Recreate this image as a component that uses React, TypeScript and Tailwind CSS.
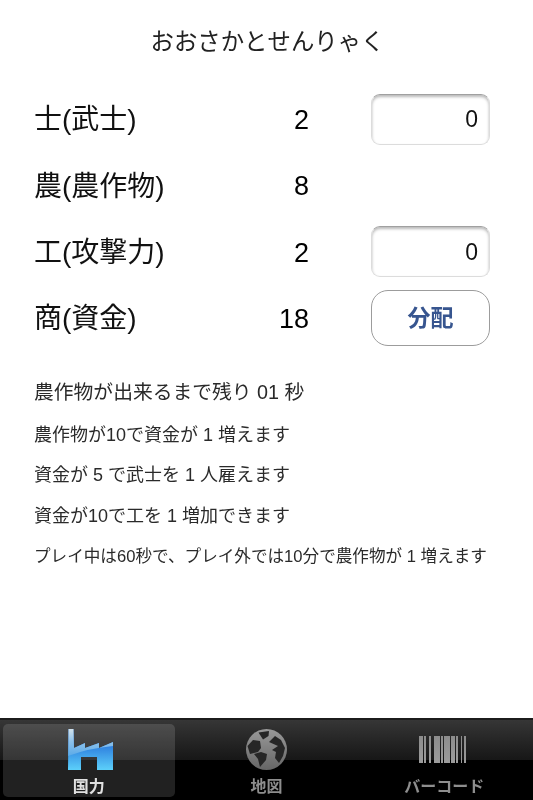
const font = '[font-family:"Liberation_Sans","Noto_Sans_CJK_JP",sans-serif]';

// widths of the bars, light and dark in turn
const barcode = [4, 1.3, 2, 2.3, 2.3, 3, 5.7, 1.3, 2, 1.3, 5.3, 1.3, 3.7, 1, 2, 3, 1.7, 1.3, 2.7];

function NumberField() {
  return (
    <div className="flex h-[51px] w-[119px] items-center justify-end rounded-[9px] border border-[#dcdcdc] border-t-[#a0a0a0] bg-white pr-[11px] text-[23px] text-[#111] shadow-[inset_0_2px_3px_rgba(0,0,0,0.28)]">
      0
    </div>
  );
}

function Row({ label, value, control }: { label: string; value: string; control?: React.ReactNode }) {
  return (
    <div className="flex h-[66.4px] items-center">
      <div className="w-[200px] pt-[2px] text-[28px] text-[#111]">{label}</div>
      <div className="w-[75px] pt-[2px] text-right text-[27px] text-black">{value}</div>
      <div className="ml-[62px]">{control}</div>
    </div>
  );
}

function FactoryIcon() {
  return (
    <svg width="45" height="41" viewBox="0 0 45 41" className="ml-[4px]">
      <defs>
        <linearGradient id="fb" x1="0" y1="0" x2="0" y2="1">
          <stop offset="0.35" stopColor="#2a78dc" />
          <stop offset="1" stopColor="#5cd0fa" />
        </linearGradient>
        <linearGradient id="fh" x1="0" y1="0" x2="0" y2="1">
          <stop offset="0" stopColor="#d4e2ea" />
          <stop offset="0.45" stopColor="#8fc2ea" />
          <stop offset="1" stopColor="#5aaae8" />
        </linearGradient>
        <clipPath id="fc">
          <path d="M0.5 0H5.5L6 19L17 14V19L31 14V19L45 13V41H29V28H13V41H0Z" />
        </clipPath>
      </defs>
      <g clipPath="url(#fc)">
        <rect width="45" height="41" fill="url(#fb)" />
        <path d="M0 0H45V17Q22 19 0 27Z" fill="url(#fh)" />
      </g>
    </svg>
  );
}

function GlobeIcon() {
  return (
    <svg width="41" height="41" viewBox="0 0 41 41">
      <defs>
        <linearGradient id="gl" x1="0" y1="0" x2="0" y2="1">
          <stop offset="0" stopColor="#999" />
          <stop offset="1" stopColor="#666" />
        </linearGradient>
      </defs>
      <circle cx="20.5" cy="20.5" r="20.5" fill="url(#gl)" />
      <g fill="#262626">
        <path d="M12.5 3.5L23 2L22.5 7L17 10.5Z" />
        <path d="M1.5 17L7 11L14 12L15 19L12 23L4 25Z" />
        <path d="M8 25L15 23L21 25L20 31L14 38L12 30Z" />
        <path d="M23 13L29 7L35 11L39 19L37 27L33 34L29 29L30 23L26 21L32 17Z" />
      </g>
    </svg>
  );
}

function BarcodeIcon() {
  return (
    <div className="mr-[2px] flex h-[27px] w-[48px] items-stretch">
      {barcode.map((w, i) => (
        <div key={i} className={i % 2 === 0 ? "bg-gradient-to-b from-[#8c8c8c] to-[#9c9c9c]" : ""} style={{ width: w }} />
      ))}
    </div>
  );
}

function TabItem({ label, active, children }: { label: string; active?: boolean; children: React.ReactNode }) {
  return (
    <div
      className={`flex h-[73px] flex-1 flex-col items-center rounded-[5px] ${
        active ? "bg-white/[0.13] text-[#e0e0e0]" : "text-[#8e8e8e]"
      }`}
    >
      <div className="flex h-[53px] items-center pb-[3px]">{children}</div>
      <div className="text-[16px] font-bold leading-[20px]">{label}</div>
    </div>
  );
}

export default function App() {
  return (
    <div className={`flex h-[800px] w-[533px] flex-col overflow-hidden bg-white blur-[0.4px] ${font}`}>
      <main className="flex-1">
        <h1 className="pt-[27px] pl-[2px] text-center text-[23.4px] leading-[30px] font-normal text-[#222]">
          おおさかとせんりゃく
        </h1>

        <section className="mt-[29px] pl-[34px]">
          <Row label="士(武士)" value="2" control={<NumberField />} />
          <Row label="農(農作物)" value="8" />
          <Row label="工(攻撃力)" value="2" control={<NumberField />} />
          <Row
            label="商(資金)"
            value="18"
            control={
              <button className="h-[56px] w-[119px] rounded-[17px] border border-[#9c9c9c] bg-white text-[23px] font-bold text-[#37558f]">
                分配
              </button>
            }
          />
        </section>

        <section className="mt-[20px] pl-[34px] leading-[41px] text-[#2a2a2a]">
          <p className="text-[19.8px]">農作物が出来るまで残り 01 秒</p>
          <p className="mt-[2px] text-[18px]">農作物が10で資金が 1 増えます</p>
          <p className="-mt-px text-[18px]">資金が 5 で武士を 1 人雇えます</p>
          <p className="text-[18px]">資金が10で工を 1 増加できます</p>
          <p className="-mt-px text-[16.6px]">プレイ中は60秒で、プレイ外では10分で農作物が 1 増えます</p>
        </section>
      </main>

      <nav className="relative h-[82px] border-t-2 border-[#1c1c1c] bg-black px-[3px] pt-[4px]">
        <div className="absolute inset-x-0 top-0 h-[40px] bg-gradient-to-b from-[#363636] to-[#171717]" />
        <div className="relative flex gap-[6px]">
          <TabItem label="国力" active>
            <FactoryIcon />
          </TabItem>
          <TabItem label="地図">
            <GlobeIcon />
          </TabItem>
          <TabItem label="バーコード">
            <BarcodeIcon />
          </TabItem>
        </div>
      </nav>
    </div>
  );
}
